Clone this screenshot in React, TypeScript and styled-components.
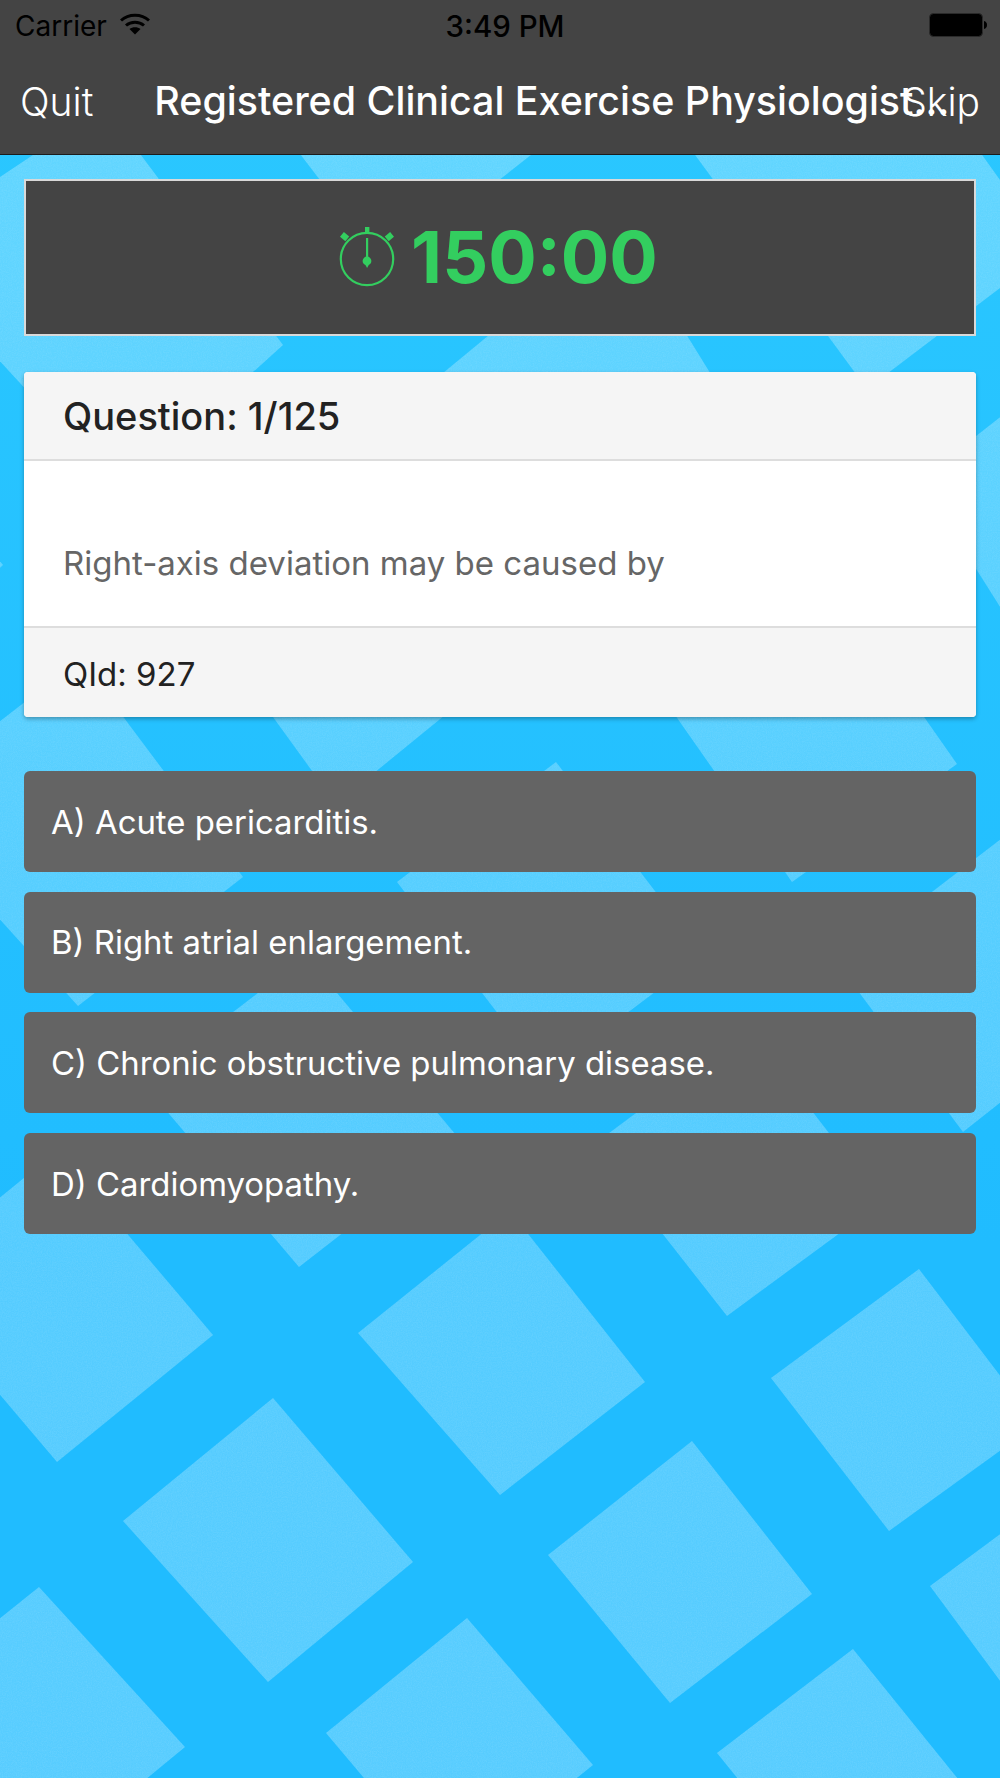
import React from "react";
import styled, { createGlobalStyle } from "styled-components";

const Global = createGlobalStyle`
  html, body { margin: 0; padding: 0; }
  body { font-family: "Inter", "Liberation Sans", sans-serif; background: #20bcff; }
`;

const Page = styled.div`
  position: relative;
  width: 1000px;
  height: 1778px;
  overflow: hidden;
  background: linear-gradient(180deg, #2bc8ff 0%, #20bcff 70%, #20bcff 100%);
`;

const Backdrop = styled.svg`
  position: absolute;
  inset: 0;
  width: 1000px;
  height: 1778px;
`;

const Layer = styled.div`
  position: relative;
  display: flex;
  flex-direction: column;
`;

const Header = styled.header`
  height: 154px;
  background: #444444;
  border-bottom: 1px solid #1c1c1c;
  display: flex;
  flex-direction: column;
`;

const StatusBar = styled.div`
  height: 50px;
  padding: 2px 13px 0 15px;
  box-sizing: border-box;
  display: flex;
  align-items: center;
  color: #000;
  font-size: 28px;
  line-height: 48px;
  position: relative;
`;

const Carrier = styled.span`
  margin-right: 13px;
`;

const WifiIcon = styled.svg`
  margin-top: -5px;
`;

const Clock = styled.span`
  position: absolute;
  left: 435px;
  width: 140px;
  text-align: center;
  font-size: 29.5px;
  font-weight: 500;
`;

const BatteryWrap = styled.svg`
  margin-left: auto;
  margin-top: -2px;
`;

const NavBar = styled.div`
  flex: 1;
  padding: 0 20px 2px 20px;
  display: flex;
  align-items: center;
  color: #fff;
  font-size: 39px;
  white-space: nowrap;
`;

const NavAction = styled.span`
  font-weight: 300;
`;

const NavTitle = styled.span`
  font-size: 39.4px;
  font-weight: 500;
  margin-left: 61px;
  margin-right: auto;
`;

const SkipAction = styled(NavAction)`
  margin-left: -100px;
`;

const Main = styled.main`
  padding: 24px 24px 0;
  display: flex;
  flex-direction: column;
`;

const Timer = styled.section`
  height: 157px;
  box-sizing: border-box;
  padding: 0 3px 2px 0;
  background: #444444;
  border: 2px solid #d9d9d9;
  display: flex;
  align-items: center;
  justify-content: center;
  gap: 16px;
  color: #33ce5f;
  margin-bottom: 36px;
`;

const TimeText = styled.span`
  font-size: 72px;
  font-weight: 700;
  line-height: 1;
`;

const Card = styled.section`
  background: #fff;
  border-radius: 4px;
  box-shadow: 0 2px 4px rgba(0, 0, 0, 0.3);
  overflow: hidden;
  margin-bottom: 54px;
  display: flex;
  flex-direction: column;
`;

const CardHeader = styled.div`
  height: 86px;
  padding: 1px 39px 0;
  display: flex;
  align-items: center;
  background: #f5f5f5;
  border-bottom: 2px solid #dddddd;
  color: #222;
  font-size: 38px;
  font-weight: 500;
`;

const CardBody = styled.div`
  height: 165px;
  padding: 0 39px 43px;
  box-sizing: border-box;
  display: flex;
  align-items: flex-end;
  color: #666;
  font-size: 33px;
`;

const CardFooter = styled.div`
  height: 86px;
  padding: 3px 39px 0;
  display: flex;
  align-items: center;
  background: #f5f5f5;
  border-top: 2px solid #dddddd;
  color: #222;
  font-size: 33px;
`;

const Answers = styled.div`
  display: flex;
  flex-direction: column;
  gap: 19.7px;
`;

const Answer = styled.div`
  height: 101px;
  padding: 0 27px;
  display: flex;
  align-items: center;
  background: #646464;
  border-radius: 6px;
  color: #fff;
  font-size: 32.9px;
`;

const tiles: string[] = [
  "-105,247 105,107 283,345 120,492",
  "-320,500 -150,380 3,565 -150,700",
  "240,75 470,-30 620,85 387,268",
  "640,80 900,40 1050,250 867,389",
  "380,425 620,227 770,470 530,668",
  "-105,803 80,659 243,877 78,1006",
  "173,579 363,424 526,649 336,804",
  "640,665 805,547 957,764 792,882",
  "920,480 1060,370 1180,560 1040,670",
  "397,882 556,762 704,955 545,1075",
  "838,964 1010,832 1130,1000 963,1132",
  "142,1082 306,956 461,1141 299,1267",
  "593,1145 749,1029 882,1202 727,1316",
  "-99,1278 57,1151 213,1335 57,1462",
  "358,1333 510,1211 645,1382 500,1495",
  "771,1378 919,1269 1037,1424 889,1531",
  "123,1521 273,1398 413,1562 268,1682",
  "548,1555 692,1441 812,1594 670,1703",
  "930,1586 1060,1490 1170,1640 1040,1735",
  "-90,1690 39,1587 185,1747 60,1850",
  "326,1733 467,1618 593,1765 450,1880",
  "717,1753 853,1649 975,1800 840,1905",
];

const Pattern = () => (
  <Backdrop viewBox="0 0 1000 1778" aria-hidden="true">
    <defs>
      <linearGradient id="tileFade" gradientUnits="userSpaceOnUse" x1="0" y1="155" x2="0" y2="1778">
        <stop offset="0" stopColor="#fff" stopOpacity="0.26" />
        <stop offset="0.5" stopColor="#fff" stopOpacity="0.23" />
        <stop offset="1" stopColor="#fff" stopOpacity="0.25" />
      </linearGradient>
      <filter id="grain" x="0" y="0" width="100%" height="100%" filterUnits="userSpaceOnUse">
        <feTurbulence type="fractalNoise" baseFrequency="0.8" numOctaves="2" seed="4" result="n" />
        <feColorMatrix
          in="n"
          type="matrix"
          values="0 0 0 0 1  0 0 0 0 1  0 0 0 0 1  0.6 0 0 0 -0.2"
          result="w"
        />
        <feComposite in="w" in2="SourceGraphic" operator="in" result="g" />
        <feMerge>
          <feMergeNode in="SourceGraphic" />
          <feMergeNode in="g" />
        </feMerge>
      </filter>
    </defs>
    <g fill="url(#tileFade)" filter="url(#grain)">
      {tiles.map((p) => (
        <polygon key={p} points={p} />
      ))}
    </g>
  </Backdrop>
);

const Wifi = () => (
  <WifiIcon width="30" height="22" viewBox="0 0 30 22" aria-hidden="true">
    <path d="M1 7.5C8.5 0.5 21.5 0.5 29 7.5" fill="none" stroke="#000" strokeWidth="3" />
    <path d="M6 12.5C11 8 19 8 24 12.5" fill="none" stroke="#000" strokeWidth="3" />
    <path d="M9.5 16L15 21.5L20.5 16C17.5 13.5 12.5 13.5 9.5 16Z" fill="#000" />
  </WifiIcon>
);

const Battery = () => (
  <BatteryWrap width="58" height="24" viewBox="0 0 58 24" aria-hidden="true">
    <rect x="0.5" y="0.5" width="53" height="23" rx="4" fill="#000" stroke="#2a2a2a" />
    <path d="M55 8C57 8.5 58 10 58 12C58 14 57 15.5 55 16Z" fill="#000" />
  </BatteryWrap>
);

const Stopwatch = () => (
  <svg width="56" height="60" viewBox="0 0 56 60" fill="none" aria-hidden="true">
    <circle cx="28" cy="32" r="26.2" stroke="currentColor" strokeWidth="2.2" />
    <rect x="26" y="0" width="4.4" height="6" fill="currentColor" />
    <rect x="1.8" y="6.5" width="7" height="6" transform="rotate(40 5.3 10)" fill="currentColor" />
    <rect x="47.2" y="6.5" width="7" height="6" transform="rotate(-40 50.7 10)" fill="currentColor" />
    <rect x="27" y="11" width="2.2" height="24" fill="currentColor" />
    <circle cx="28" cy="34" r="4.4" fill="currentColor" />
    <path d="M26.5 38H29.7L28.1 41Z" fill="currentColor" />
  </svg>
);

const options = [
  "A) Acute pericarditis.",
  "B) Right atrial enlargement.",
  "C) Chronic obstructive pulmonary disease.",
  "D) Cardiomyopathy.",
];

export default function App() {
  return (
    <Page>
      <Global />
      <Pattern />
      <Layer>
        <Header>
          <StatusBar>
            <Carrier>Carrier</Carrier>
            <Wifi />
            <Clock>3:49 PM</Clock>
            <Battery />
          </StatusBar>
          <NavBar>
            <NavAction>Quit</NavAction>
            <NavTitle>Registered Clinical Exercise Physiologist…</NavTitle>
            <SkipAction>Skip</SkipAction>
          </NavBar>
        </Header>
        <Main>
          <Timer>
            <Stopwatch />
            <TimeText>150:00</TimeText>
          </Timer>
          <Card>
            <CardHeader>Question: 1/125</CardHeader>
            <CardBody>Right-axis deviation may be caused by</CardBody>
            <CardFooter>QId: 927</CardFooter>
          </Card>
          <Answers>
            {options.map((o) => (
              <Answer key={o}>{o}</Answer>
            ))}
          </Answers>
        </Main>
      </Layer>
    </Page>
  );
}
